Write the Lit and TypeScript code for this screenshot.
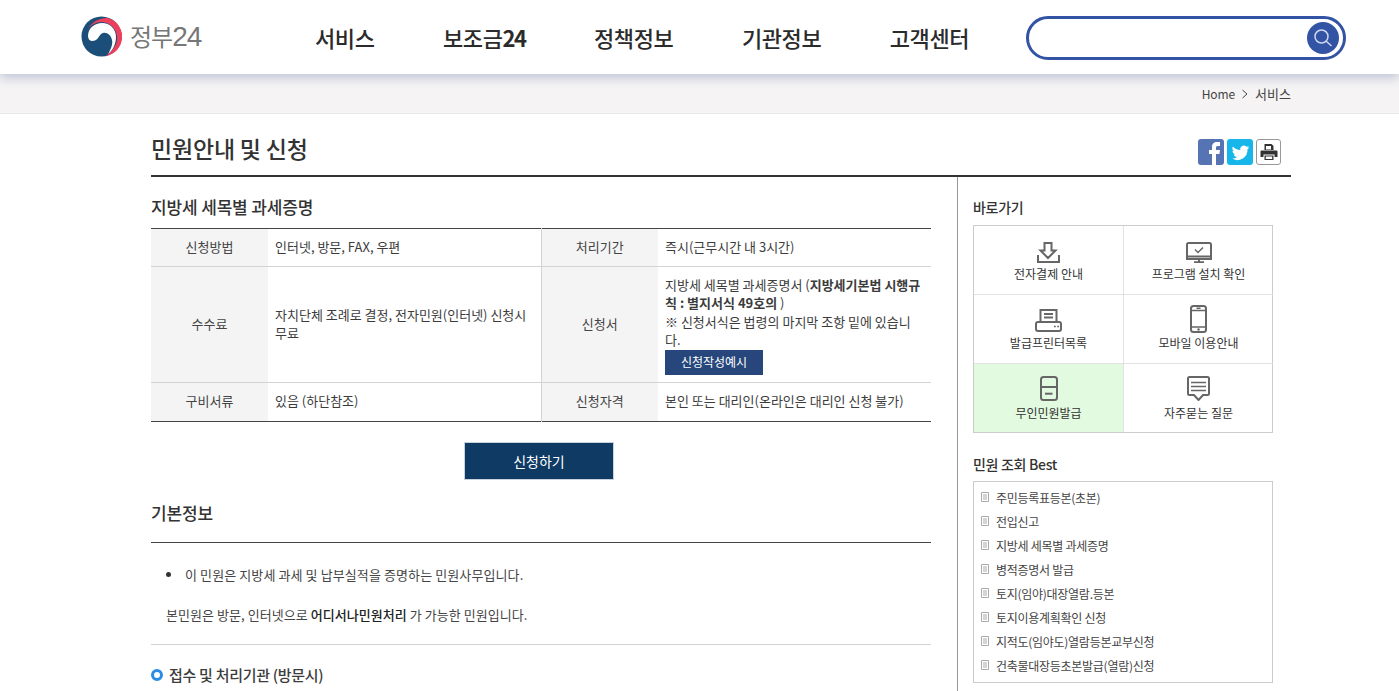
import { LitElement, html, css, svg } from "lit";
import { customElement } from "lit/decorators.js";

const I = {
  download: svg`<path d="M7.500 1h7v7.500h4L11 16 3.500 8.500h4z M1 13v7h21v-7" fill="none"/>`,
  monitor: svg`<path d="M2.500 1h21a1.500 1.500 0 0 1 1.500 1.500V17H1V2.500A1.500 1.500 0 0 1 2.500 1z M1 14.500h24 M13 17v3 M8 20.200h10" fill="none"/><path d="M9 7.500l3 3 5-5" fill="none" stroke-width="1.500"/>`,
  printer: svg`<path d="M5.500 13V1h16v12 M3 13h21a2 2 0 0 1 2 2v5a2 2 0 0 1-2 2H3a2 2 0 0 1-2-2v-5a2 2 0 0 1 2-2z M9 5h9 M9 8.500h9" fill="none"/><path d="M19 17.500h1.800 M22.200 17.500H24" stroke-width="1.500"/>`,
  phone: svg`<rect x="1" y="1" width="15" height="26" rx="2.500" fill="none"/><path d="M1 5.500h15 M1 22h15 M6.500 3.300h4" fill="none" stroke-width="1.500"/><circle cx="8.500" cy="24.500" r="1.200" fill="#666" stroke="none"/>`,
  kiosk: svg`<rect x="1" y="1" width="16" height="23" rx="2.500" fill="none"/><path d="M1 11h16" fill="none"/><path d="M5 17.700h7.500" stroke-width="2"/>`,
  chat: svg`<path d="M2.500 1h18A1.500 1.500 0 0 1 22 2.500v15a1.500 1.500 0 0 1-1.500 1.500H16l-4.500 5L7 19H2.500A1.500 1.500 0 0 1 1 17.500v-15A1.500 1.500 0 0 1 2.500 1z" fill="none"/><path d="M4 6.500h15 M4 10.500h15 M4 14.500h15" fill="none" stroke-width="1.700"/>`,
};

const quick = [
  { icon: I.download, w: 23, h: 21, mb: 2, label: "전자결제 안내" },
  { icon: I.monitor, w: 26, h: 21, mb: 2, label: "프로그램 설치 확인" },
  { icon: I.printer, w: 27, h: 23, mb: 2, label: "발급프린터목록" },
  { icon: I.phone, w: 17, h: 28, mb: 1, label: "모바일 이용안내" },
  { icon: I.kiosk, w: 18, h: 25, mb: 3, label: "무인민원발급", on: true },
  { icon: I.chat, w: 23, h: 25, mb: 3, label: "자주묻는 질문" },
];

const best = [
  "주민등록표등본(초본)",
  "전입신고",
  "지방세 세목별 과세증명",
  "병적증명서 발급",
  "토지(임야)대장열람.등본",
  "토지이용계획확인 신청",
  "지적도(임야도)열람등본교부신청",
  "건축물대장등초본발급(열람)신청",
];

@customElement("app-root")
export class AppRoot extends LitElement {
  static styles = css`
    :host {
      display: block;
      height: 691px;
      overflow: hidden;
      background: #fff;
      color: #3c3c3c;
      font-family: "Noto Sans CJK KR", "Noto Sans", sans-serif;
      font-size: 13px;
    }
    * { box-sizing: border-box; }
    .head {
      position: relative;
      z-index: 2;
      height: 74px;
      background: #fff;
      box-shadow: 0 4px 10px rgba(70, 95, 150, 0.3);
      display: flex;
      align-items: center;
    }
    .logo {
      display: flex;
      align-items: center;
      gap: 8px;
      margin-left: 81px;
      margin-bottom: 2px;
      width: 234px;
      color: #777;
      font-size: 24px;
      letter-spacing: -1px;
    }
    .logo span { transform: translateY(-1px); }
    .logo b { font-family: "Liberation Sans", sans-serif; font-weight: 400; font-size: 28px; letter-spacing: -1px; }
    .nav {
      display: flex;
      gap: 68.500px;
      font-size: 22px;
      font-weight: 500;
      letter-spacing: -0.400px;
      color: #2b2b2b;
      white-space: nowrap;
    }
    .nav b { font-weight: 700; letter-spacing: -1.500px; }
    .search {
      margin: 2px 0 0 57px;
      width: 320px;
      height: 44px;
      border: 3px solid #3353a4;
      border-radius: 22px;
      display: flex;
      justify-content: flex-end;
      align-items: center;
      padding-right: 4px;
    }
    .search i {
      width: 32px;
      height: 32px;
      border-radius: 50%;
      background: #3353a4;
      display: flex;
      align-items: center;
      justify-content: center;
    }
    .crumb {
      height: 40px;
      background: #f5f3f4;
      border-bottom: 1px solid #e8e8e8;
      padding-right: 108px;
      display: flex;
      justify-content: flex-end;
      align-items: center;
      gap: 6px;
      font-size: 13px;
      color: #444;
    }
    .crumb em { font-style: normal; font-size: 12px; letter-spacing: -0.100px; }
    .wrap { margin-left: 151px; width: 1140px; }
    .title {
      height: 63px;
      border-bottom: 2px solid #333;
      display: flex;
      justify-content: space-between;
      align-items: flex-start;
    }
    .title h1 {
      margin: 16px 0 0;
      font-size: 23px;
      line-height: 36px;
      font-weight: 500;
      letter-spacing: -0.200px;
      color: #333;
    }
    .share { display: flex; gap: 3px; margin: 25px 10px 0 0; }
    .share b {
      width: 26px;
      height: 26px;
      border-radius: 3px;
      display: flex;
      align-items: center;
      justify-content: center;
      overflow: hidden;
    }
    .fb { background: #5673b4; }
    .tw { background: #17b6ea; }
    .share .pr { background: #fff; border: 1px solid #999; width: 25px; }
    .cols { display: flex; height: 515px; }
    .main { width: 807px; padding-right: 26px; border-right: 1px solid #999; }
    .side { padding-left: 15px; width: 315px; }
    h2 {
      margin: 0;
      font-size: 17px;
      font-weight: 500;
      letter-spacing: -0.150px;
      color: #333;
    }
    .h-a { line-height: 24px; margin-top: 18px; margin-bottom: 9px; }
    table {
      width: 780px;
      table-layout: fixed;
      border-collapse: collapse;
      border-top: 1px solid #444;
      border-bottom: 1px solid #444;
      line-height: 18.700px;
    }
    th {
      width: 117px;
      background: #f4f4f4;
      font-weight: 400;
      color: #444;
      text-align: center;
      border-bottom: 1px solid #d3d3d3;
      padding: 0;
    }
    td {
      padding: 9px 7px;
      border-bottom: 1px solid #d3d3d3;
      vertical-align: middle;
      word-break: break-all;
    }
    th + td + th { border-left: 1px solid #d3d3d3; }
    tr:last-child th, tr:last-child td { border-bottom: 0; }
    tr:last-child td { padding-bottom: 11px; }
    tr:last-child th { padding-bottom: 2px; }
    td.form { padding-bottom: 7px; line-height: 18.500px; }
    td strong { font-weight: 700; }
    .doc { display: flex; align-items: center; justify-content: center; width: 98px; height: 25px; background: #27477c; color: #fff; font-size: 12px; }
    .apply-row { display: flex; justify-content: center; margin-top: 20px; padding-right: 4px; }
    .apply {
      width: 150px;
      height: 38px;
      background: #0e3a63;
      border: 1px solid #c8d2dc;
      color: #fff;
      font-size: 14px;
      display: flex;
      align-items: center;
      justify-content: center;
    }
    .h-b { margin-top: 19px; line-height: 28px; padding-bottom: 15px; border-bottom: 1px solid #444; }
    .bul { margin: 22px 0 0; padding-left: 34px; line-height: 20px; list-style: none; position: relative; color: #444; letter-spacing: 0.100px; }
    .bul::before { content: ""; position: absolute; left: 15px; top: 7px; width: 5px; height: 5px; border-radius: 50%; background: #333; }
    .para { margin: 20px 0 0; padding: 0 0 19px 15px; line-height: 20px; border-bottom: 1px solid #d3d3d3; color: #444; letter-spacing: 0.050px; }
    .para strong { font-weight: 500; color: #222; }
    .h-c {
      margin-top: 18px;
      display: flex;
      align-items: center;
      gap: 6px;
      font-size: 15px;
      font-weight: 500;
      line-height: 24px;
      letter-spacing: -0.300px;
    }
    .h-c i { width: 12px; height: 12px; border: 3px solid #2b8be6; border-radius: 50%; }
    .sh { font-size: 14px; font-weight: 500; line-height: 20px; margin-top: 20px; margin-bottom: 8px; color: #333; letter-spacing: -0.300px; }
    .grid {
      width: 300px;
      display: grid;
      grid-template-columns: 150px 149px;
      grid-template-rows: 69px 69px 68px;
      border: 1px solid #ccc;
    }
    .cell {
      display: flex;
      flex-direction: column;
      align-items: center;
      justify-content: flex-end;
      padding-bottom: 11px;
      font-size: 12px;
      line-height: 18px;
      border-bottom: 1px solid #e2e2e2;
      color: #333;
    }
    .cell:nth-child(odd) { border-right: 1px solid #e2e2e2; }
    .cell:nth-last-child(-n+2) { border-bottom: 0; padding-bottom: 10px; }
    .cell.on { background: #e2fadf; }
    .cell svg { stroke: #666; stroke-width: 2; display: block; }
    .sh2 { margin-top: 21px; margin-bottom: 7px; }
    .list { list-style: none; margin: 0; padding: 3px 0 4px 7px; width: 300px; height: 202px; border: 1px solid #ccc; font-size: 12px; letter-spacing: -0.280px; }
    .list li { height: 24px; display: flex; align-items: center; gap: 7px; color: #444; }
    .list svg { flex: none; }
  `;

  render() {
    return html`
      <div class="head">
        <div class="logo">
          <svg width="41" height="41" viewBox="0 0 41 41">
            <circle cx="20.500" cy="20.500" r="20" fill="#1b4e78"/>
            <path d="M7 13C11 5 20 1.500 27 2A19.500 19.500 0 0 1 25 40C33 34 37 27 36 20C35 12 28 6 20 6C15 6 10 9 7 13z" fill="#ee3f5c"/>
            <path d="M7 20C7 12 14 7 21 7C29 7 35 13 35 21C35 29 31 35 27 38C30 33 32 28 31 24C30 19 26 16 22 17C18 18 18 23 14 24.500C10 26 7 24 7 20z" fill="#fff"/>
          </svg>
          <span>정부<b>24</b></span>
        </div>
        <div class="nav"><span>서비스</span><span>보조금<b>24</b></span><span>정책정보</span><span>기관정보</span><span>고객센터</span></div>
        <div class="search">
          <i><svg width="20" height="20" viewBox="0 0 20 20" fill="none" stroke="#cfd8ee" stroke-width="1.500"><circle cx="8.500" cy="8.500" r="6.500"/><path d="M13 13l5.500 5"/></svg></i>
        </div>
      </div>
      <div class="crumb">
        <em>Home</em>
        <svg width="8" height="10" viewBox="0 0 8 10" fill="none" stroke="#444"><path d="M1.500 1l4.500 4-4.500 4"/></svg>
        <span>서비스</span>
      </div>
      <div class="wrap">
        <div class="title">
          <h1>민원안내 및 신청</h1>
          <div class="share">
            <b class="fb"><svg width="26" height="26" viewBox="0 0 26 26"><path fill="#fff" d="M14 26V15h-3v-4h3V8c0-3.500 2-5 5-5h3v4h-2c-1.500 0-2 .5-2 2v2h4l-.6 4H18v11z"/></svg></b>
            <b class="tw"><svg width="21" height="21" viewBox="0 0 24 24"><path fill="#fff" d="M22 6.200c-.7.300-1.500.5-2.400.6.900-.5 1.500-1.300 1.800-2.300-.8.500-1.700.8-2.600 1a4.100 4.100 0 0 0-7 3.700C8.400 9.100 5.400 7.500 3.400 5a4.100 4.100 0 0 0 1.300 5.500c-.7 0-1.300-.2-1.900-.5 0 2 1.400 3.700 3.300 4.100-.6.200-1.200.2-1.900.1.500 1.600 2 2.800 3.800 2.800A8.300 8.300 0 0 1 2 18.700 11.600 11.600 0 0 0 20 8.400c.8-.6 1.500-1.300 2-2.200z"/></svg></b>
            <b class="pr"><svg width="18" height="18" viewBox="0 0 18 18"><path fill="#333" d="M4.500 1h7l2 2v4h-9z M1.500 7.500h15a1 1 0 0 1 1 1V14h-3v-2.500h-11V14h-3V8.500a1 1 0 0 1 1-1z M4.500 12.500h9V17h-9z"/><path fill="#fff" d="M6 3h5v3.500H6z M5.800 13.500h6.400V16H5.800z"/></svg></b>
          </div>
        </div>
        <div class="cols">
          <div class="main">
            <h2 class="h-a">지방세 세목별 과세증명</h2>
            <table>
              <tr><th>신청방법</th><td>인터넷, 방문, FAX, 우편</td><th>처리기간</th><td>즉시(근무시간 내 3시간)</td></tr>
              <tr>
                <th>수수료</th>
                <td>자치단체 조례로 결정, 전자민원(인터넷) 신청시 무료</td>
                <th>신청서</th>
                <td class="form">지방세 세목별 과세증명서 (<strong>지방세기본법 시행규칙 : 별지서식 49호의</strong> )<br />※ 신청서식은 법령의 마지막 조항 밑에 있습니다.<span class="doc">신청작성예시</span></td>
              </tr>
              <tr><th>구비서류</th><td>있음 (하단참조)</td><th>신청자격</th><td>본인 또는 대리인(온라인은 대리인 신청 불가)</td></tr>
            </table>
            <div class="apply-row"><div class="apply">신청하기</div></div>
            <h2 class="h-b">기본정보</h2>
            <ul class="bul"><li>이 민원은 지방세 과세 및 납부실적을 증명하는 민원사무입니다.</li></ul>
            <p class="para">본민원은 방문, 인터넷으로 <strong>어디서나민원처리</strong> 가 가능한 민원입니다.</p>
            <div class="h-c"><i></i>접수 및 처리기관 (방문시)</div>
          </div>
          <div class="side">
            <div class="sh">바로가기</div>
            <div class="grid">
              ${quick.map(
                (q) => html`<div class="cell ${q.on ? "on" : ""}">
                  <svg width=${q.w} height=${q.h} viewBox="0 0 ${q.w} ${q.h}" style="margin-bottom:${q.mb}px">${q.icon}</svg>
                  <span>${q.label}</span>
                </div>`
              )}
            </div>
            <div class="sh sh2">민원 조회 Best</div>
            <ul class="list">
              ${best.map(
                (b) => html`<li>
                  <svg width="8" height="10" viewBox="0 0 8 10" fill="none" stroke="#aaa"><path d="M.5.500h7v9h-7z M2 3h4 M2 5h4 M2 7h4"/></svg>
                  <span>${b}</span>
                </li>`
              )}
            </ul>
          </div>
        </div>
      </div>
    `;
  }
}
